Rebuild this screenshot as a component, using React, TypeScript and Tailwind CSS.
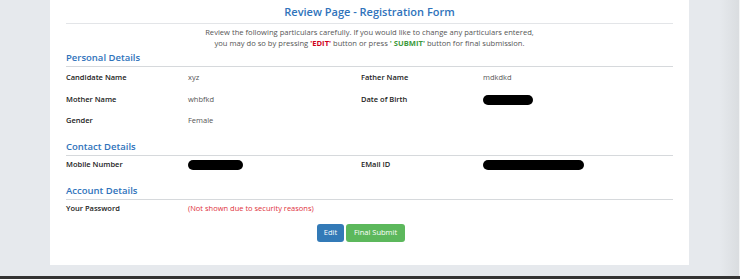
import React from 'react';

type Field = { label: string; value?: string; redact?: number };

const Redact: React.FC<{ w: number; h?: number }> = ({ w, h = 10 }) => (
  <span className="inline-block rounded-full bg-black align-middle" style={{ width: w, height: h }} />
);

const SectionTitle: React.FC<{ title: string }> = ({ title }) => (
  <div className="border-b border-[#d6d9dc] pb-[1px] text-[9.5px] leading-[15px] font-semibold text-[#2f73bb]">
    {title}
  </div>
);

const Cell: React.FC<{ f?: Field }> = ({ f }) => {
  if (!f) return <><div /><div /></>;
  return (
    <>
      <div className="text-[7.5px] leading-[12px] font-semibold text-[#222]">{f.label}</div>
      <div className="text-[7.5px] leading-[12px] text-[#555]">
        {f.redact ? <Redact w={f.redact} /> : f.value}
      </div>
    </>
  );
};

const Row: React.FC<{ left: Field; right?: Field }> = ({ left, right }) => (
  <div className="grid h-[12px] grid-cols-[122px_173px_122px_1fr] items-center">
    <Cell f={left} />
    <Cell f={right} />
  </div>
);

export default function App() {
  return (
    <div className="relative h-[279px] w-[740px] overflow-hidden bg-[#e6e9ed] font-['Open_Sans',sans-serif]">
      <div className="flex">
        <div className="w-[50px] shrink-0" />
        <div className="h-[265px] w-[639px] bg-white px-4">
          <div className="border-b border-[#e3e5e8] pt-[3px] pb-[2px] text-center text-[11px] leading-[18px] font-semibold text-[#2f73bb]">
            Review Page - Registration Form
          </div>
          <div className="mt-[3px] text-center text-[7.6px] leading-[11px] text-[#555]">
            Review the following particulars carefully. If you would like to change any particulars entered,
            <br />
            you may do so by pressing <b className="text-[#d0021b]">'EDIT'</b> button or press <b className="text-[#3c9a3c]">' SUBMIT'</b> button for final submission.
          </div>

          <div className="mt-[1px]">
            <SectionTitle title="Personal Details" />
            <div className="flex flex-col gap-[9.5px] pt-[4px]">
              <Row left={{ label: 'Candidate Name', value: 'xyz' }} right={{ label: 'Father Name', value: 'mdkdkd' }} />
              <Row left={{ label: 'Mother Name', value: 'whbfkd' }} right={{ label: 'Date of Birth', redact: 50 }} />
              <Row left={{ label: 'Gender', value: 'Female' }} />
            </div>
          </div>

          <div className="mt-[13px]">
            <SectionTitle title="Contact Details" />
            <div className="pt-[2px]">
              <Row left={{ label: 'Mobile Number', redact: 55 }} right={{ label: 'EMail ID', redact: 101 }} />
            </div>
          </div>

          <div className="mt-[13px]">
            <SectionTitle title="Account Details" />
            <div className="grid grid-cols-[122px_1fr] items-center pt-[2px]">
              <div className="text-[7.5px] leading-[12px] font-semibold text-[#222]">Your Password</div>
              <div className="text-[7.5px] leading-[12px] text-[#e0313b]">(Not shown due to security reasons)</div>
            </div>
          </div>

          <div className="mt-[10px] flex justify-center gap-[2px] pr-[17px]">
            <button className="h-[18px] w-[27px] rounded-[3px] bg-[#337ab7] text-[7.5px] text-white">Edit</button>
            <button className="h-[18px] w-[59px] rounded-[3px] bg-[#5cb85c] text-[7.5px] text-white">Final Submit</button>
          </div>
        </div>
        <div className="flex-1" />
      </div>
      <div className="absolute right-0 top-0 h-full w-[20px] bg-gradient-to-r from-[#e6e9ed] to-[#d9dcdf]" />
      <div className="absolute right-0 top-0 h-full w-[1px] bg-[#f3f4f5]" />
      <div className="absolute bottom-0 left-0 h-[3px] w-full bg-[#333]" />
    </div>
  );
}
